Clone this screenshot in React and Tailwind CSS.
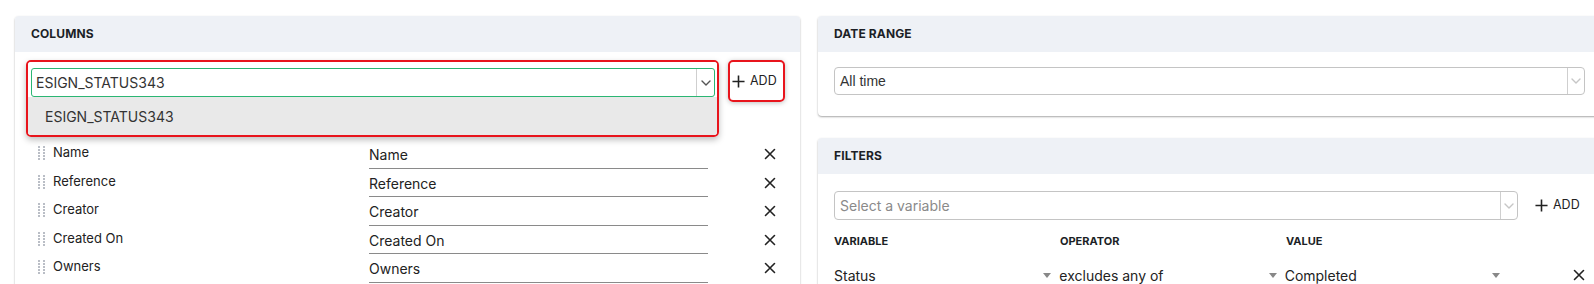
import { useState } from "react";

const columns = ["Name", "Reference", "Creator", "Created On", "Owners"];

function Grip() {
  return (
    <div className="grid grid-cols-2 gap-x-[3px] gap-y-[1px] w-[7px]">
      {Array.from({ length: 10 }).map((_, i) => (
        <span key={i} className="w-[2px] h-[2px] bg-[#a3a9b3] rounded-full" />
      ))}
    </div>
  );
}

function Cross({ size = 12 }) {
  return (
    <svg width={size} height={size} viewBox="0 0 12 12" fill="none">
      <path d="M1.5 1.5l9 9M10.5 1.5l-9 9" stroke="#222" strokeWidth="1.6" strokeLinecap="round" />
    </svg>
  );
}

function Plus({ size = 13 }) {
  return (
    <svg width={size} height={size} viewBox="0 0 14 14" fill="none">
      <path d="M7 0.5v13M0.5 7h13" stroke="#222" strokeWidth="1.7" />
    </svg>
  );
}

function Chevron({ color = "#555" }) {
  return (
    <svg width="10" height="6" viewBox="0 0 10 6" fill="none">
      <path d="M1 1l4 4 4-4" stroke={color} strokeWidth="1.4" strokeLinecap="round" strokeLinejoin="round" />
    </svg>
  );
}

function Caret() {
  return <span className="w-0 h-0 border-l-[4px] border-r-[4px] border-t-[5px] border-l-transparent border-r-transparent border-t-[#888]" />;
}

function Card({ title, children, className = "" }) {
  return (
    <section className={`bg-white rounded-[4px] shadow-[0_1px_2px_rgba(0,0,0,0.35)] ${className}`}>
      <div className="h-[36px] bg-[#eef1f6] px-4 flex items-center rounded-t-[4px]">
        <h2 className="text-[12px] font-bold text-[#1c1f26] tracking-[0.01em]">{title}</h2>
      </div>
      {children}
    </section>
  );
}

export default function App() {
  const [query, setQuery] = useState("ESIGN_STATUS343");

  return (
    <div className="w-[1594px] h-[284px] overflow-hidden bg-white font-['Inter',sans-serif] text-[#333]">
      <div className="flex gap-[18px] pt-4 pl-[15px] w-[1610px]">
        {/* columns */}
        <Card title="COLUMNS" className="w-[785px] h-[300px]">
          <div className="flex items-start pt-2 pl-[11px]">
            <div className="w-[693px] border-2 border-[#e8141c] rounded-[5px] shadow-[0_3px_6px_rgba(0,0,0,0.25)] overflow-hidden">
              <div className="pt-[6px] pl-[3px] pr-[2px] bg-white">
                <div className="h-[29px] flex border border-[#2bb673] rounded-[3px] bg-white">
                  <input
                    value={query}
                    onChange={(e) => setQuery(e.target.value)}
                    className="flex-1 px-[4px] text-[14px] text-[#333] outline-none bg-transparent"
                  />
                  <div className="w-[18px] border-l border-[#cfcfcf] flex items-center justify-center">
                    <Chevron />
                  </div>
                </div>
              </div>
              <div className="h-[38px] bg-[#e9e9e9] flex items-center pl-[17px] text-[14px] text-[#333]">
                ESIGN_STATUS343
              </div>
            </div>
            <button className="ml-[9px] w-[57px] h-[42px] border-2 border-[#e8141c] rounded-[5px] shadow-[0_1px_5px_rgba(0,0,0,0.25)] flex items-center gap-[5px] pl-[2px] text-[12.5px] text-[#222]">
              <Plus size={13} />
              ADD
            </button>
          </div>
          <div className="mt-[3px]">
            {columns.map((c) => (
              <div key={c} className="h-[28.5px] flex items-start">
                <div className="w-[23px] shrink-0" />
                <div className="pt-[6px]">
                  <Grip />
                </div>
                <div className="w-[324px] pl-[8px] pt-[3px] text-[13px] text-[#222]">{c}</div>
                <div className="w-[339px] h-full border-b border-[#8a8a8a] text-[14px] text-[#222] pt-[4px]">{c}</div>
                <div className="w-[68px] h-full flex justify-end items-start pt-[8px]">
                  <Cross />
                </div>
              </div>
            ))}
          </div>
        </Card>

        <div className="flex flex-col gap-[22px]">
          <Card title="DATE RANGE" className="w-[783px]">
            <div className="px-4 pt-[15px] pb-[21px]">
              <div className="h-[28px] flex border border-[#c4c4c4] rounded-[4px]">
                <div className="flex-1 flex items-center pl-[5px] text-[14px] text-[#333] font-['Liberation_Sans',sans-serif]">All time</div>
                <div className="w-[17px] border-l border-[#cfcfcf] flex items-center justify-center">
                  <Chevron color="#c6c6c6" />
                </div>
              </div>
            </div>
          </Card>

          <Card title="FILTERS" className="w-[783px] h-[200px]">
            <div className="px-4 pt-[17px]">
              <div className="flex items-center">
                <div className="w-[684px] h-[29px] flex border border-[#c4c4c4] rounded-[4px]">
                  <div className="flex-1 flex items-center pl-[5px] text-[14px] text-[#8a8a8a]">Select a variable</div>
                  <div className="w-[17px] border-l border-[#cfcfcf] flex items-center justify-center">
                    <Chevron color="#c6c6c6" />
                  </div>
                </div>
                <div className="ml-[17px] flex items-center gap-[5px] text-[12.5px] text-[#222]">
                  <Plus size={13} />
                  ADD
                </div>
              </div>
              <div className="flex mt-[13px] text-[11px] font-bold text-[#1c1f26]">
                <div className="w-[226px]">VARIABLE</div>
                <div className="w-[226px]">OPERATOR</div>
                <div>VALUE</div>
              </div>
              <div className="flex items-center mt-[15px] text-[14px] text-[#222]">
                <div className="w-[226px] flex items-center justify-between pr-[8px]">
                  <span>Status</span>
                  <Caret />
                </div>
                <div className="w-[226px] flex items-center justify-between pr-[8px]">
                  <span>excludes any of</span>
                  <Caret />
                </div>
                <div className="w-[222px] flex items-center justify-between pr-[6px]">
                  <span>Completed</span>
                  <Caret />
                </div>
                <div className="ml-[67px]">
                  <Cross />
                </div>
              </div>
            </div>
          </Card>
        </div>
      </div>
    </div>
  );
}
